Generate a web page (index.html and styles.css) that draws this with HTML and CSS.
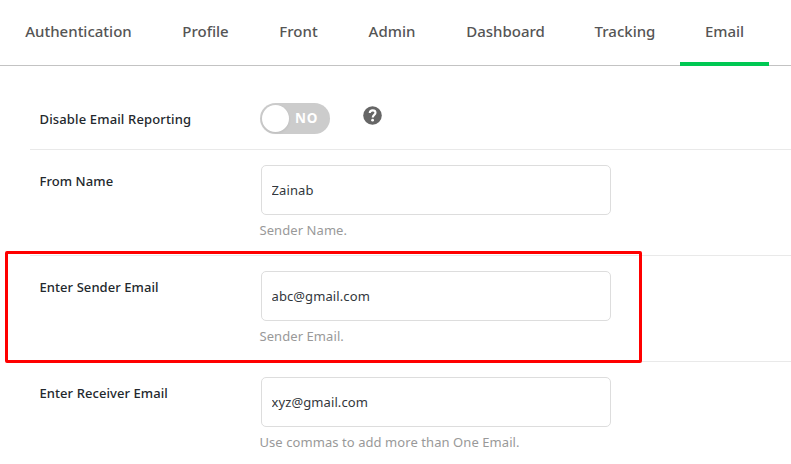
FILE: index.html
```html
<!DOCTYPE html>
<html lang="en">
  <head>
    <meta charset="UTF-8" />
    <meta name="viewport" content="width=device-width, initial-scale=1.0" />
    <title>Email Settings</title>
    <link rel="stylesheet" href="styles.css">
  </head>
  <body>
    <nav class="tabs">
      <a class="tab">Authentication</a>
      <a class="tab">Profile</a>
      <a class="tab">Front</a>
      <a class="tab">Admin</a>
      <a class="tab">Dashboard</a>
      <a class="tab">Tracking</a>
      <a class="tab active">Email</a>
    </nav>

    <main class="settings">
      <div class="row row-toggle">
        <span class="label label-toggle">Disable Email Reporting</span>
        <div class="switch">
          <span class="knob"></span>
          <span class="state">NO</span>
        </div>
        <svg class="help" width="19" height="19" viewBox="0 0 19 19">
          <circle cx="9.5" cy="9.5" r="9.3" fill="#666" />
          <path d="M6.7 7C6.9 5.2 8 4.4 9.6 4.4C11.3 4.4 12.5 5.3 12.5 6.8C12.5 8.9 9.7 9 9.7 11.5" fill="none" stroke="#fff" stroke-width="2.1" />
          <circle cx="9.6" cy="14.2" r="1.4" fill="#fff" />
        </svg>
      </div>

      <div class="row">
        <label class="label" for="fromName">From Name</label>
        <div class="field">
          <input class="input" id="fromName" type="text" value="Zainab">
          <p class="hint">Sender Name.</p>
        </div>
      </div>

      <div class="row">
        <label class="label" for="senderEmail">Enter Sender Email</label>
        <div class="field">
          <input class="input" id="senderEmail" type="text" value="abc@gmail.com">
          <p class="hint">Sender Email.</p>
        </div>
        <div class="highlight"></div>
      </div>

      <div class="row">
        <label class="label" for="receiverEmail">Enter Receiver Email</label>
        <div class="field">
          <input class="input" id="receiverEmail" type="text" value="xyz@gmail.com">
          <p class="hint">Use commas to add more than One Email.</p>
        </div>
      </div>
    </main>
  </body>
</html>
```
FILE: styles.css
```css
* {
  box-sizing: border-box;
}
body {
  margin: 0;
  height: 464px;
  overflow: hidden;
  background-color: #fff;
  font-family: "Segoe UI", "Noto Sans", "Open Sans", sans-serif;
  color: #23282d;
}

/* Tabs */
.tabs {
  display: grid;
  grid-template-columns: 157px 97px 89px 98px 129px 110px 89px;
  height: 66px;
  border-bottom: 1px solid #c3c3c3;
}
.tab {
  height: 66px;
  line-height: 63px;
  text-align: center;
  font-size: 15px;
  font-weight: 500;
  color: #555;
  cursor: pointer;
}
.tab.active {
  border-bottom: 4px solid #00c853;
}

/* Settings rows */
.settings {
  padding-left: 30px;
}
.row {
  display: flex;
  position: relative;
  height: 106px;
  padding: 15px 0 0 9.5px;
  border-bottom: 1px solid #e9e9e9;
}
.row-toggle {
  height: 84px;
  padding-top: 37px;
}
.row:last-child {
  border-bottom: none;
}
.label {
  width: 220.5px;
  padding-top: 7px;
  line-height: 18px;
  font-size: 13px;
  font-weight: 500;
  letter-spacing: 0.07px;
}
.label-toggle {
  letter-spacing: 0.14px;
}
.field {
  width: 352px;
}
.input {
  display: block;
  width: 350px;
  height: 50px;
  margin: 0 0 0 1px;
  padding: 0 10px 0 9.5px;
  border: 1px solid #ddd;
  border-radius: 5px;
  background-color: #fff;
  font-family: inherit;
  font-size: 13px;
  letter-spacing: 0.1px;
  color: #32373c;
}
.hint {
  margin: 6px 0 0 -0.5px;
  line-height: 18px;
  font-size: 13px;
  letter-spacing: 0.07px;
  color: #999;
}

/* Toggle */
.switch {
  display: flex;
  align-items: center;
  width: 70px;
  height: 31px;
  padding-left: 2px;
  border-radius: 16px;
  background-color: #ccc;
}
.knob {
  width: 27px;
  height: 27px;
  border-radius: 50%;
  background-color: #fff;
  box-shadow: 0 1px 3px rgba(0, 0, 0, 0.08);
}
.state {
  margin: -2px 0 0 6px;
  font-size: 13.5px;
  font-weight: 700;
  letter-spacing: 0.8px;
  color: #fff;
}
.help {
  margin: 2.5px 0 0 33px;
}

/* Red frame around the sender email row */
.highlight {
  position: absolute;
  top: -5px;
  left: -25px;
  width: 637px;
  height: 112px;
  border: 3px solid #f00;
  border-radius: 2px;
  pointer-events: none;
}
```
